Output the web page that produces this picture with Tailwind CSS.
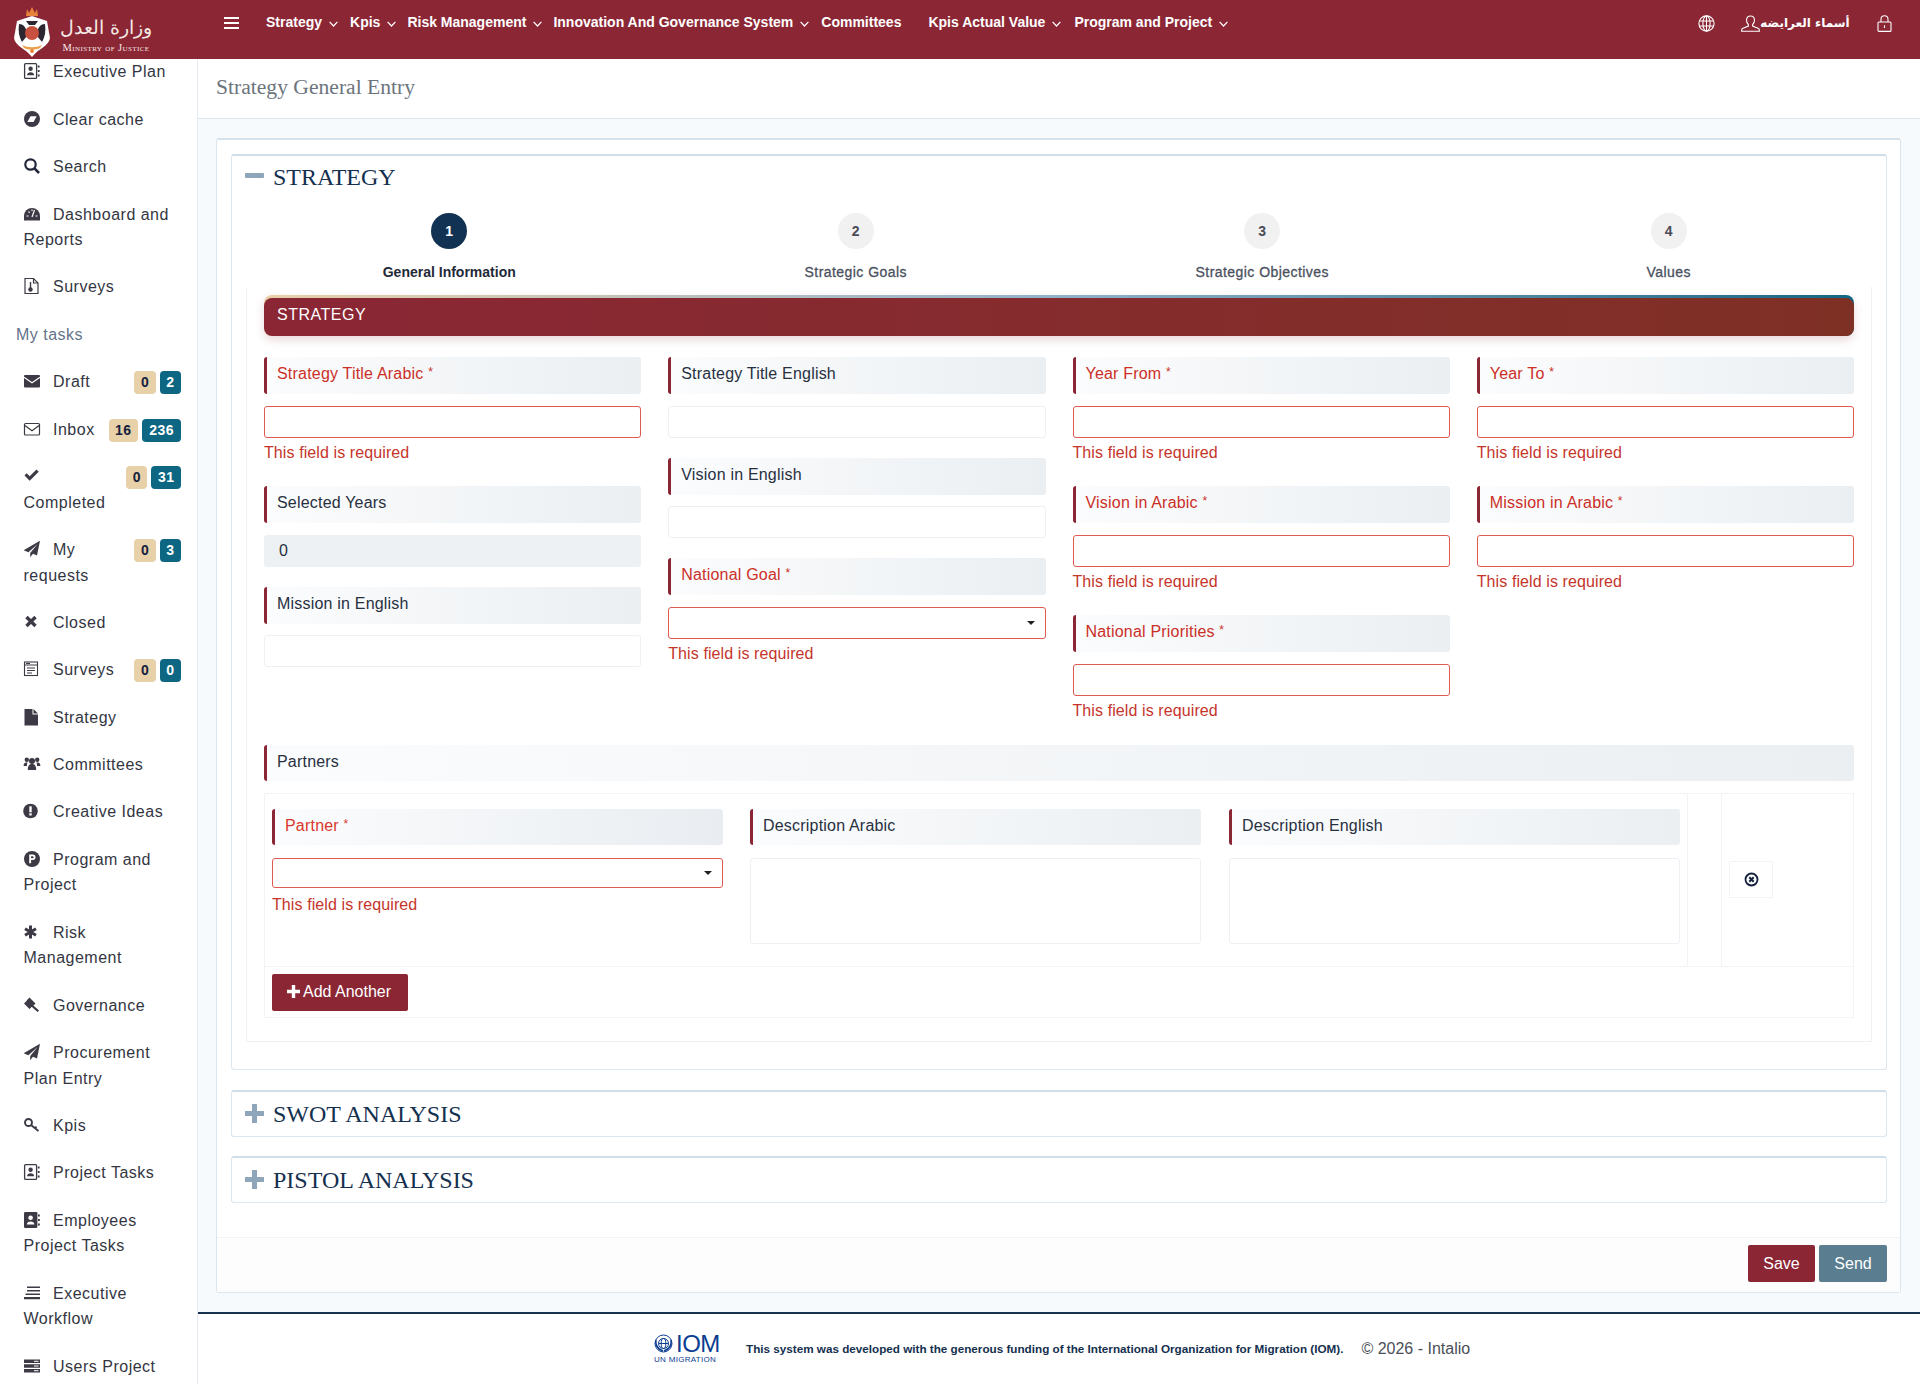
<!DOCTYPE html>
<html lang="en">
<head>
  <meta charset="UTF-8">
  <title>Strategy General Entry</title>
  <script src="https://cdn.jsdelivr.net/npm/@tailwindcss/browser@4"></script>
</head>
<body class="w-[1920px] h-[1384px] overflow-hidden flex flex-col bg-white font-['Liberation_Sans',sans-serif] text-[16px] text-[#333642]">

  <!-- Icon set -->
  <svg class="hidden">
    <symbol id="i-contact" viewBox="0 0 18 18"><rect x="1.6" y="1.6" width="12" height="14.8" rx="1" fill="none" stroke="currentColor" stroke-width="1.3"/><circle cx="7.6" cy="6.7" r="2.2"/><path d="M4 13.2c0-3.9 7.2-3.9 7.2 0z"/><path d="M14.8 3.5h1.8v2h-1.8zM14.8 8h1.8v2h-1.8zM14.8 12.5h1.8v2h-1.8z"/></symbol>
    <symbol id="i-contact-fill" viewBox="0 0 18 18"><rect x="1" y="1" width="13.4" height="16" rx="1.2"/><circle cx="7.6" cy="6.7" r="2.3" fill="#fff"/><path d="M3.8 13.6c0-4.2 7.6-4.2 7.6 0z" fill="#fff"/><path d="M15 3.5h1.8v2H15zM15 8h1.8v2H15zM15 12.5h1.8v2H15z"/></symbol>
    <symbol id="i-plane" viewBox="0 0 18 18"><path d="M17 .8 .6 10.3l4.8 1.9L14.6 4 7.2 13v4.2l2.8-3.4 4 1.6z"/></symbol>
  </svg>

  <!-- Top bar -->
  <header class="h-[59px] shrink-0 bg-[#8b2635] flex items-start text-white relative z-10">
    <div class="w-[224px] shrink-0 h-[59px] flex items-start pl-[13px]">
      <svg class="w-[38px] h-[52px] mt-[6px] shrink-0" viewBox="0 0 38 52">
        <path d="M14 3l2 4 3-6 3 6 2-4 1 7H13z" fill="#e8843a"/>
        <path d="M19 10 34 15 37 32C36 40 26 42 19 51 12 42 2 40 1 32L4 15z" fill="#fff"/>
        <path d="M6 18c5 0 8 4 8 12l-5 6c-3-5-4-11-3-18zM32 18c-5 0-8 4-8 12l5 6c3-5 4-11 3-18z" fill="#2c2630"/>
        <circle cx="19" cy="27" r="7" fill="#c8503c"/>
        <path d="M13 15h12l-3 4h-6z" fill="#2c2630"/>
        <path d="M9 39c6 3 14 3 20 0l-2 3c-5 2-11 2-16 0z" fill="#e8a04a"/>
        <circle cx="19" cy="45" r="2" fill="#e8843a"/>
      </svg>
      <div class="ml-[9px] w-[92px] flex flex-col items-center text-[#f4e9e4] whitespace-nowrap">
        <span class="font-['DejaVu_Sans',sans-serif] text-[19px] leading-[30px] mt-[12px] font-extralight" dir="rtl" lang="ar">وزارة العدل</span>
        <span class="font-['Liberation_Serif',serif] text-[10.5px] leading-[12px] tracking-[0.4px] [font-variant:small-caps]">Ministry of Justice</span>
      </div>
    </div>
    <button class="flex flex-col gap-[2.5px] w-[15px] mt-[17px] mr-[27px] shrink-0">
      <span class="h-[2.4px] bg-white"></span><span class="h-[2.4px] bg-white"></span><span class="h-[2.4px] bg-white"></span>
    </button>
    <nav class="flex items-center h-[44px] text-[14px] font-bold whitespace-nowrap">
      <a class="flex items-center gap-[7px] mr-[12px]">Strategy<svg class="w-[9px] h-[6px] mt-[4px]" viewBox="0 0 9 6" fill="none" stroke="#fff" stroke-width="1.2"><path d="M.6.8 4.5 5 8.4.8"/></svg></a>
      <a class="flex items-center gap-[7px] mr-[11px]">Kpis<svg class="w-[9px] h-[6px] mt-[4px]" viewBox="0 0 9 6" fill="none" stroke="#fff" stroke-width="1.2"><path d="M.6.8 4.5 5 8.4.8"/></svg></a>
      <a class="flex items-center gap-[7px] mr-[11px]">Risk Management<svg class="w-[9px] h-[6px] mt-[4px]" viewBox="0 0 9 6" fill="none" stroke="#fff" stroke-width="1.2"><path d="M.6.8 4.5 5 8.4.8"/></svg></a>
      <a class="flex items-center gap-[7px] mr-[12px]">Innovation And Governance System<svg class="w-[9px] h-[6px] mt-[4px]" viewBox="0 0 9 6" fill="none" stroke="#fff" stroke-width="1.2"><path d="M.6.8 4.5 5 8.4.8"/></svg></a>
      <a class="mr-[27px]">Committees</a>
      <a class="flex items-center gap-[7px] mr-[13px]">Kpis Actual Value<svg class="w-[9px] h-[6px] mt-[4px]" viewBox="0 0 9 6" fill="none" stroke="#fff" stroke-width="1.2"><path d="M.6.8 4.5 5 8.4.8"/></svg></a>
      <a class="flex items-center gap-[7px]">Program and Project<svg class="w-[9px] h-[6px] mt-[4px]" viewBox="0 0 9 6" fill="none" stroke="#fff" stroke-width="1.2"><path d="M.6.8 4.5 5 8.4.8"/></svg></a>
    </nav>
    <div class="ml-auto flex items-center h-[46px] pr-[28px]">
      <svg class="w-[17px] h-[17px] mr-[26px]" viewBox="0 0 17 17" fill="none" stroke="#fff" stroke-width="1.1"><circle cx="8.5" cy="8.5" r="7.6"/><ellipse cx="8.5" cy="8.5" rx="3.6" ry="7.6"/><path d="M8.5.9v15.2M1 6h15M1 11h15"/></svg>
      <svg class="w-[19px] h-[17px]" viewBox="0 0 19 17" fill="none" stroke="#fff" stroke-width="1.1"><path d="M9.5 1c-2.6 0-4 1.8-4 4.2 0 2 1 3.4 1.9 4.4v1.5L1.4 13.4c-.6.3-.8.9-.8 2.9h17.8c0-2-.2-2.6-.8-2.9l-6-2.3V9.6c.9-1 1.9-2.4 1.9-4.4C13.5 2.8 12.1 1 9.5 1z"/></svg>
      <span class="font-['DejaVu_Sans',sans-serif] text-[12px] font-bold w-[90px] text-center whitespace-nowrap" dir="rtl" lang="ar">أسماء العرايضه</span>
      <svg class="w-[15px] h-[17px] ml-[27px]" viewBox="0 0 15 17" fill="none" stroke="#fff" stroke-width="1.1"><rect x="1" y="7" width="13" height="9.4" rx="1"/><path d="M4 7V4.2C4 2 5.5.8 7.5.8S11 2 11 4.2V7M7.5 10.2V13"/></svg>
    </div>
  </header>

  <div class="flex-1 flex min-h-0">
    <!-- Side menu -->
    <aside class="w-[198px] shrink-0 border-r border-[#e6ebf1] overflow-hidden bg-white">
      <nav class="-mt-[10.5px] tracking-[0.5px] leading-[25.6px]">
        <div class="pl-[23.5px] pr-[16px] py-[10.9px]"><svg class="inline-block w-[18px] h-[18px] -ml-[1px] mr-[12.5px] align-[-3px] text-[#3e3a45]" fill="currentColor"><use href="#i-contact"/></svg>Executive Plan</div>
        <div class="pl-[23.5px] pr-[16px] py-[10.9px]"><svg class="inline-block w-[18px] h-[18px] -ml-[1px] mr-[12.5px] align-[-3px]" viewBox="0 0 18 18"><circle cx="9" cy="9" r="8" fill="#3e3a45"/><path d="M4.3 12 7.5 6.2H13.7L10.5 12z" fill="#fff"/></svg>Clear cache</div>
        <div class="pl-[23.5px] pr-[16px] py-[10.9px]"><svg class="inline-block w-[18px] h-[18px] -ml-[1px] mr-[12.5px] align-[-3px]" viewBox="0 0 18 18" fill="none" stroke="#22263a"><circle cx="7.5" cy="7.5" r="5.2" stroke-width="2.2"/><path d="M11.2 11.2 16 16" stroke-width="2.6"/></svg>Search</div>
        <div class="pl-[23.5px] pr-[16px] py-[10.9px]"><svg class="inline-block w-[18px] h-[18px] -ml-[1px] mr-[12.5px] align-[-3px]" viewBox="0 0 18 18"><path d="M1 15.5V11a8 8 0 0 1 16 0v4.5z" fill="#3e3a45"/><path d="M9 12 11.5 5M3.5 11h2M12.5 11h2M5.5 6.5l1.2 1.2M9 4.5V6" stroke="#fff" stroke-width="1.2" fill="none"/></svg>Dashboard and Reports</div>
        <div class="pl-[23.5px] pr-[16px] py-[10.9px]"><svg class="inline-block w-[18px] h-[18px] -ml-[1px] mr-[12.5px] align-[-3px]" viewBox="0 0 18 18"><path d="M2 1.5h8.5L15 6v10.5H2z" fill="none" stroke="#3e3a45" stroke-width="1.2"/><path d="M10.5 1.5V6H15" fill="none" stroke="#3e3a45" stroke-width="1.2"/><circle cx="7.5" cy="12.5" r="2.2" fill="#3e3a45"/><rect x="6.8" y="5" width="1.4" height="6" fill="#3e3a45"/></svg>Surveys</div>

        <div class="pl-[16px] py-[10.9px] text-[#64748b]">My tasks</div>

        <div class="pl-[23.5px] pr-[16px] py-[10.9px]">
          <span class="float-right flex gap-[4px] mt-[2px] text-[14px] leading-[23px] font-bold"><span class="bg-[#e8d0a9] text-[#14213d] rounded-[4px] px-[6.5px]">0</span><span class="bg-[#0d6783] text-white rounded-[4px] px-[6.5px]">2</span></span>
          <svg class="inline-block w-[18px] h-[18px] -ml-[1px] mr-[12.5px] align-[-3px]" viewBox="0 0 18 18"><rect x="1" y="3" width="16" height="12.5" rx="1" fill="#3e3a45"/><path d="M1 5.2 9 10.8 17 5.2" fill="none" stroke="#fff" stroke-width="1.1"/></svg>Draft</div>
        <div class="pl-[23.5px] pr-[16px] py-[10.9px]">
          <span class="float-right flex gap-[4px] mt-[2px] text-[14px] leading-[23px] font-bold"><span class="bg-[#e8d0a9] text-[#14213d] rounded-[4px] px-[6.5px]">16</span><span class="bg-[#0d6783] text-white rounded-[4px] px-[7px]">236</span></span>
          <svg class="inline-block w-[18px] h-[18px] -ml-[1px] mr-[12.5px] align-[-3px]" viewBox="0 0 18 18" fill="none" stroke="#3e3a45" stroke-width="1.2"><rect x="1.5" y="3.5" width="15" height="11.5" rx="1"/><path d="M1.5 5.2 9 10.8 16.5 5.2"/></svg>Inbox</div>
        <div class="pl-[23.5px] pr-[16px] py-[10.9px]">
          <span class="float-right flex gap-[4px] mt-[2px] text-[14px] leading-[23px] font-bold"><span class="bg-[#e8d0a9] text-[#14213d] rounded-[4px] px-[6.5px]">0</span><span class="bg-[#0d6783] text-white rounded-[4px] px-[6.5px]">31</span></span>
          <svg class="inline-block w-[18px] h-[18px] -ml-[1px] mr-[12.5px] align-[-3px]" viewBox="0 0 18 18"><path d="M1.5 8.5 3.7 6.3 6.7 9.3 13.5 2.5 15.7 4.7 6.7 13.7z" fill="#3e3a45"/></svg>Completed</div>
        <div class="pl-[23.5px] pr-[16px] py-[10.9px]">
          <span class="float-right flex gap-[4px] mt-[2px] text-[14px] leading-[23px] font-bold"><span class="bg-[#e8d0a9] text-[#14213d] rounded-[4px] px-[6.5px]">0</span><span class="bg-[#0d6783] text-white rounded-[4px] px-[6.5px]">3</span></span>
          <svg class="inline-block w-[18px] h-[18px] -ml-[1px] mr-[12.5px] align-[-3px] text-[#3e3a45]" fill="currentColor"><use href="#i-plane"/></svg>My requests</div>
        <div class="pl-[23.5px] pr-[16px] py-[10.9px]"><svg class="inline-block w-[18px] h-[18px] -ml-[1px] mr-[12.5px] align-[-3px]" viewBox="0 0 18 18" fill="none" stroke="#3e3a45" stroke-width="3.4"><path d="M3.5 4 12.5 13M12.5 4 3.5 13"/></svg>Closed</div>
        <div class="pl-[23.5px] pr-[16px] py-[10.9px]">
          <span class="float-right flex gap-[4px] mt-[2px] text-[14px] leading-[23px] font-bold"><span class="bg-[#e8d0a9] text-[#14213d] rounded-[4px] px-[6.5px]">0</span><span class="bg-[#0d6783] text-white rounded-[4px] px-[6.5px]">0</span></span>
          <svg class="inline-block w-[18px] h-[18px] -ml-[1px] mr-[12.5px] align-[-3px]" viewBox="0 0 18 18" fill="none" stroke="#3e3a45" stroke-width="1.1"><rect x="1.5" y="2" width="13" height="13.5"/><path d="M1.5 5H14.5M4 8h8M4 10.5h8M4 13h5"/><path d="M3 3.5h4"/></svg>Surveys</div>
        <div class="pl-[23.5px] pr-[16px] py-[10.9px]"><svg class="inline-block w-[18px] h-[18px] -ml-[1px] mr-[12.5px] align-[-3px]" viewBox="0 0 18 18" fill="#3e3a45"><path d="M1.5 1h8v5.5H15v11H1.5zM10.5 1 15 5.5h-4.5z"/></svg>Strategy</div>
        <div class="pl-[23.5px] pr-[16px] py-[10.9px]"><svg class="inline-block w-[18px] h-[18px] -ml-[1px] mr-[12.5px] align-[-3px]" viewBox="0 0 18 18" fill="#3e3a45"><circle cx="3.8" cy="4.8" r="2.2"/><circle cx="14.2" cy="4.8" r="2.2"/><circle cx="9" cy="6" r="3"/><path d="M.6 11c0-3 1.5-4 4-3.5-.6 1-.8 2-.6 3.5zM17.4 11c0-3-1.5-4-4-3.5.6 1 .8 2 .6 3.5zM4.8 15c0-5 2-6 4.2-6s4.2 1 4.2 6z"/></svg>Committees</div>
        <div class="pl-[23.5px] pr-[16px] py-[10.9px]"><svg class="inline-block w-[18px] h-[18px] -ml-[1px] mr-[12.5px] align-[-3px]" viewBox="0 0 18 18"><circle cx="7.5" cy="9" r="7.3" fill="#3e3a45"/><rect x="6.3" y="4.3" width="2.4" height="6" fill="#fff"/><rect x="6.3" y="11.3" width="2.4" height="2.2" fill="#fff"/></svg>Creative Ideas</div>
        <div class="pl-[23.5px] pr-[16px] py-[10.9px]"><svg class="inline-block w-[18px] h-[18px] -ml-[1px] mr-[12.5px] align-[-3px]" viewBox="0 0 18 18"><circle cx="9" cy="9" r="8" fill="#3e3a45"/><path d="M6.2 4.5h3.6a2.7 2.7 0 0 1 0 5.4H8.1v3.3H6.2zM8.1 6.2v2h1.5a1 1 0 0 0 0-2z" fill="#fff"/></svg>Program and Project</div>
        <div class="pl-[23.5px] pr-[16px] py-[10.9px]"><svg class="inline-block w-[18px] h-[18px] -ml-[1px] mr-[12.5px] align-[-3px]" viewBox="0 0 18 18" fill="none" stroke="#3e3a45" stroke-width="3"><path d="M7.5 2.5v13M2 5.7 13 12.3M13 5.7 2 12.3"/></svg>Risk Management</div>
        <div class="pl-[23.5px] pr-[16px] py-[10.9px]"><svg class="inline-block w-[18px] h-[18px] -ml-[1px] mr-[12.5px] align-[-3px]" viewBox="0 0 18 18" fill="#3e3a45"><path d="M6.5 1.5 12.5 7.5 9.5 10.5 3.5 4.5zM1 7.5 4 4.5 9.5 10 6.5 13zM9.3 8.5 16 14.5 14.5 16 7.8 10z"/></svg>Governance</div>
        <div class="pl-[23.5px] pr-[16px] py-[10.9px]"><svg class="inline-block w-[18px] h-[18px] -ml-[1px] mr-[12.5px] align-[-3px] text-[#3e3a45]" fill="currentColor"><use href="#i-plane"/></svg>Procurement Plan Entry</div>
        <div class="pl-[23.5px] pr-[16px] py-[10.9px]"><svg class="inline-block w-[18px] h-[18px] -ml-[1px] mr-[12.5px] align-[-3px]" viewBox="0 0 18 18" fill="none" stroke="#3e3a45"><circle cx="5.5" cy="6.5" r="3.5" stroke-width="1.9"/><path d="M8 9 15.5 15M12 12.2l1.5-1.5" stroke-width="1.9"/></svg>Kpis</div>
        <div class="pl-[23.5px] pr-[16px] py-[10.9px]"><svg class="inline-block w-[18px] h-[18px] -ml-[1px] mr-[12.5px] align-[-3px] text-[#3e3a45]" fill="currentColor"><use href="#i-contact"/></svg>Project Tasks</div>
        <div class="pl-[23.5px] pr-[16px] py-[10.9px]"><svg class="inline-block w-[18px] h-[18px] -ml-[1px] mr-[12.5px] align-[-3px] text-[#3e3a45]" fill="currentColor"><use href="#i-contact-fill"/></svg>Employees Project Tasks</div>
        <div class="pl-[23.5px] pr-[16px] py-[10.9px]"><svg class="inline-block w-[18px] h-[18px] -ml-[1px] mr-[12.5px] align-[-3px]" viewBox="0 0 18 18" fill="#3e3a45"><path d="M4 2.5h13v1.6H4zM4 6h13v1.6H4zM2.5 9.5H17v1.6H2.5zM1 13h16v2.2H1z"/></svg>Executive Workflow</div>
        <div class="pl-[23.5px] pr-[16px] py-[10.9px]"><svg class="inline-block w-[18px] h-[18px] -ml-[1px] mr-[12.5px] align-[-3px]" viewBox="0 0 18 18"><path d="M1 2.5h16v3.6H1zM1 7.2h16v3.6H1zM1 11.9h16v3.6H1z" fill="#3e3a45"/><path d="M11 4.3h4.500M11 9h4.500M11 13.700h4.500" stroke="#fff" stroke-width="1"/></svg>Users Project</div>
      </nav>
    </aside>

    <!-- Main content -->
    <main class="flex-1 min-w-0 flex flex-col bg-[#f6fafd]">
      <div class="h-[60px] shrink-0 bg-white border-b border-[#dde6ee] flex items-center pl-[18px] pb-[2px]">
        <h1 class="font-['Liberation_Serif',serif] text-[21.6px] font-normal text-[#6c757d]">Strategy General Entry</h1>
      </div>

      <div class="shrink-0 ml-[18px] mr-[19px] mt-[19px] h-[1155px] bg-white border border-[#dbe6ee] border-t-2 border-t-[#d5e2eb] rounded-[3px] flex flex-col">
        <div class="pl-[14px] pr-[13px] pt-[14px]">

          <!-- Strategy accordion -->
          <section class="h-[916px] border border-[#dbe6ee] border-t-2 border-t-[#cfdfe9] rounded-[3px]">
            <div class="h-[45px] flex items-center pl-[13px] pb-[4px]">
              <span class="w-[19px] h-[5px] bg-[#8ea5ba] rounded-[1px] mr-[9px] -mt-[2px]"></span>
              <h2 class="font-['Liberation_Serif',serif] text-[24px] text-[#14304f] font-normal">STRATEGY</h2>
            </div>

            <div class="mx-[14px]">
              <!-- Steps -->
              <div class="grid grid-cols-4 pt-[12px] h-[86px] text-[14px] text-center">
                <div class="flex flex-col items-center">
                  <span class="w-[36px] h-[36px] rounded-full bg-[#123253] text-white font-bold flex items-center justify-center">1</span>
                  <span class="mt-[13px] leading-[20px] font-bold text-[#1f2937]">General Information</span>
                </div>
                <div class="flex flex-col items-center tracking-[0.45px]">
                  <span class="w-[36px] h-[36px] rounded-full bg-[#f1f1f2] text-[#4b4b57] font-bold flex items-center justify-center">2</span>
                  <span class="mt-[13px] leading-[20px] text-[#4a5160] [-webkit-text-stroke:0.3px_#4a5160]">Strategic Goals</span>
                </div>
                <div class="flex flex-col items-center tracking-[0.45px]">
                  <span class="w-[36px] h-[36px] rounded-full bg-[#f1f1f2] text-[#4b4b57] font-bold flex items-center justify-center">3</span>
                  <span class="mt-[13px] leading-[20px] text-[#4a5160] [-webkit-text-stroke:0.3px_#4a5160]">Strategic Objectives</span>
                </div>
                <div class="flex flex-col items-center tracking-[0.45px]">
                  <span class="w-[36px] h-[36px] rounded-full bg-[#f1f1f2] text-[#4b4b57] font-bold flex items-center justify-center">4</span>
                  <span class="mt-[13px] leading-[20px] text-[#4a5160] [-webkit-text-stroke:0.3px_#4a5160]">Values</span>
                </div>
              </div>

              <!-- Form panel -->
              <div class="h-[755px] border-x border-b border-[#eef2f5] pt-[8px] px-[17px]">
                <div class="rounded-[8px] pt-[3px] bg-linear-to-r from-[#e8d0a9] via-[#8fb2cc] to-[#0d6783] shadow-[0_4px_10px_rgba(139,38,53,0.18)]">
                  <div class="h-[38px] rounded-[8px] bg-linear-to-r from-[#8b2635] to-[#7f3025] text-white tracking-[0.5px] leading-[34px] pl-[13px]">STRATEGY</div>
                </div>

                <div class="grid grid-cols-4 gap-x-[27px] mt-[21px] mb-[1px] leading-[34px] tracking-[0.2px]">
                  <!-- Column 1 -->
                  <div>
                    <div class="mb-[19px]">
                      <div class="h-[37px] mb-[11.5px] pl-[10px] border-l-[3.5px] border-[#8b2635] rounded-[3px] bg-linear-to-r from-[#fbfcfd] to-[#ebeff2] text-[#cb2f27]">Strategy Title Arabic <span class="text-[12px] leading-[0] align-[3px]">*</span></div>
                      <div class="h-[32px] bg-white border border-[#e05a4f] rounded-[3px]"></div>
                      <p class="leading-[29.5px] tracking-[0.1px] text-[#c5352b]">This field is required</p>
                    </div>
                    <div class="mb-[20px]">
                      <div class="h-[37px] mb-[11.5px] pl-[10px] border-l-[3.5px] border-[#8b2635] rounded-[3px] bg-linear-to-r from-[#fbfcfd] to-[#ebeff2] text-[#27303f]">Selected Years</div>
                      <div class="h-[32px] bg-[#eef1f4] rounded-[3px] pl-[15px] leading-[32px] text-[#27303f]">0</div>
                    </div>
                    <div class="mb-[20px]">
                      <div class="h-[37px] mb-[11.5px] pl-[10px] border-l-[3.5px] border-[#8b2635] rounded-[3px] bg-linear-to-r from-[#fbfcfd] to-[#ebeff2] text-[#27303f]">Mission in English</div>
                      <div class="h-[32px] bg-white border border-[#edf1f5] rounded-[3px]"></div>
                    </div>
                  </div>
                  <!-- Column 2 -->
                  <div>
                    <div class="mb-[20px]">
                      <div class="h-[37px] mb-[11.5px] pl-[10px] border-l-[3.5px] border-[#8b2635] rounded-[3px] bg-linear-to-r from-[#fbfcfd] to-[#ebeff2] text-[#27303f]">Strategy Title English</div>
                      <div class="h-[32px] bg-white border border-[#edf1f5] rounded-[3px]"></div>
                    </div>
                    <div class="mb-[20px]">
                      <div class="h-[37px] mb-[11.5px] pl-[10px] border-l-[3.5px] border-[#8b2635] rounded-[3px] bg-linear-to-r from-[#fbfcfd] to-[#ebeff2] text-[#27303f]">Vision in English</div>
                      <div class="h-[32px] bg-white border border-[#edf1f5] rounded-[3px]"></div>
                    </div>
                    <div class="mb-[19px]">
                      <div class="h-[37px] mb-[11.5px] pl-[10px] border-l-[3.5px] border-[#8b2635] rounded-[3px] bg-linear-to-r from-[#fbfcfd] to-[#ebeff2] text-[#cb2f27]">National Goal <span class="text-[12px] leading-[0] align-[3px]">*</span></div>
                      <div class="h-[32px] bg-white border border-[#e05a4f] rounded-[3px] flex items-center justify-end pr-[10px]"><span class="w-0 h-0 border-x-[4px] border-x-transparent border-t-[4px] border-t-[#222]"></span></div>
                      <p class="leading-[29.5px] tracking-[0.1px] text-[#c5352b]">This field is required</p>
                    </div>
                  </div>
                  <!-- Column 3 -->
                  <div>
                    <div class="mb-[19px]">
                      <div class="h-[37px] mb-[11.5px] pl-[10px] border-l-[3.5px] border-[#8b2635] rounded-[3px] bg-linear-to-r from-[#fbfcfd] to-[#ebeff2] text-[#cb2f27]">Year From <span class="text-[12px] leading-[0] align-[3px]">*</span></div>
                      <div class="h-[32px] bg-white border border-[#e05a4f] rounded-[3px]"></div>
                      <p class="leading-[29.5px] tracking-[0.1px] text-[#c5352b]">This field is required</p>
                    </div>
                    <div class="mb-[19px]">
                      <div class="h-[37px] mb-[11.5px] pl-[10px] border-l-[3.5px] border-[#8b2635] rounded-[3px] bg-linear-to-r from-[#fbfcfd] to-[#ebeff2] text-[#cb2f27]">Vision in Arabic <span class="text-[12px] leading-[0] align-[3px]">*</span></div>
                      <div class="h-[32px] bg-white border border-[#e05a4f] rounded-[3px]"></div>
                      <p class="leading-[29.5px] tracking-[0.1px] text-[#c5352b]">This field is required</p>
                    </div>
                    <div class="mb-[19px]">
                      <div class="h-[37px] mb-[11.5px] pl-[10px] border-l-[3.5px] border-[#8b2635] rounded-[3px] bg-linear-to-r from-[#fbfcfd] to-[#ebeff2] text-[#cb2f27]">National Priorities <span class="text-[12px] leading-[0] align-[3px]">*</span></div>
                      <div class="h-[32px] bg-white border border-[#e05a4f] rounded-[3px]"></div>
                      <p class="leading-[29.5px] tracking-[0.1px] text-[#c5352b]">This field is required</p>
                    </div>
                  </div>
                  <!-- Column 4 -->
                  <div>
                    <div class="mb-[19px]">
                      <div class="h-[37px] mb-[11.5px] pl-[10px] border-l-[3.5px] border-[#8b2635] rounded-[3px] bg-linear-to-r from-[#fbfcfd] to-[#ebeff2] text-[#cb2f27]">Year To <span class="text-[12px] leading-[0] align-[3px]">*</span></div>
                      <div class="h-[32px] bg-white border border-[#e05a4f] rounded-[3px]"></div>
                      <p class="leading-[29.5px] tracking-[0.1px] text-[#c5352b]">This field is required</p>
                    </div>
                    <div class="mb-[19px]">
                      <div class="h-[37px] mb-[11.5px] pl-[10px] border-l-[3.5px] border-[#8b2635] rounded-[3px] bg-linear-to-r from-[#fbfcfd] to-[#ebeff2] text-[#cb2f27]">Mission in Arabic <span class="text-[12px] leading-[0] align-[3px]">*</span></div>
                      <div class="h-[32px] bg-white border border-[#e05a4f] rounded-[3px]"></div>
                      <p class="leading-[29.5px] tracking-[0.1px] text-[#c5352b]">This field is required</p>
                    </div>
                  </div>
                </div>

                <!-- Partners -->
                <div class="h-[36px] pl-[10px] leading-[34px] tracking-[0.2px] border-l-[3.5px] border-[#8b2635] rounded-[3px] bg-linear-to-r from-[#fbfcfd] to-[#ebeff2] text-[#27303f]">Partners</div>
                <div class="mt-[12px] h-[225px] border border-[#f1f3f5] leading-[34px] tracking-[0.2px]">
                  <div class="h-[173px] flex border-b border-[#f1f3f5]">
                    <div class="w-[451px] ml-[7px] mt-[15px] shrink-0">
                      <div class="h-[36px] mb-[13px] pl-[10px] border-l-[3.5px] border-[#8b2635] rounded-[3px] bg-linear-to-r from-[#fbfcfd] to-[#e9edf1] text-[#d8382c]">Partner <span class="text-[12px] leading-[0] align-[3px]">*</span></div>
                      <div class="h-[30px] bg-white border border-[#e05a4f] rounded-[3px] flex items-center justify-end pr-[10px]"><span class="w-0 h-0 border-x-[4px] border-x-transparent border-t-[4px] border-t-[#222]"></span></div>
                      <p class="leading-[34px] tracking-[0.1px] text-[#c5352b]">This field is required</p>
                    </div>
                    <div class="w-[451px] ml-[27px] mt-[15px] shrink-0">
                      <div class="h-[36px] mb-[13px] pl-[10px] border-l-[3.5px] border-[#8b2635] rounded-[3px] bg-linear-to-r from-[#fbfcfd] to-[#ebeff2] text-[#27303f]">Description Arabic</div>
                      <div class="h-[86px] bg-white border border-[#edf1f5] rounded-[3px]"></div>
                    </div>
                    <div class="w-[451px] ml-[28px] mt-[15px] shrink-0">
                      <div class="h-[36px] mb-[13px] pl-[10px] border-l-[3.5px] border-[#8b2635] rounded-[3px] bg-linear-to-r from-[#fbfcfd] to-[#ebeff2] text-[#27303f]">Description English</div>
                      <div class="h-[86px] bg-white border border-[#edf1f5] rounded-[3px]"></div>
                    </div>
                    <div class="ml-[7px] w-[34px] border-l border-[#f1f3f5]"></div>
                    <div class="flex-1 border-l border-[#f1f3f5] flex items-center pl-[7px] pb-[2px]">
                      <button class="w-[44px] h-[37px] border border-[#f1f3f5] flex items-center justify-center">
                        <svg class="w-[15px] h-[15px]" viewBox="0 0 15 15" fill="none" stroke="#14213d"><circle cx="7.5" cy="7.5" r="6" stroke-width="1.8"/><path d="M5.3 5.3 9.7 9.7M9.7 5.3 5.3 9.7" stroke-width="2"/></svg>
                      </button>
                    </div>
                  </div>
                  <div class="pt-[7px] pl-[7px]">
                    <button class="h-[37px] w-[136px] bg-[#8b2635] rounded-[2px] text-white flex items-center pl-[15px] pb-[2px] tracking-normal">
                      <svg class="w-[13px] h-[13px] mr-[3px]" viewBox="0 0 13 13" fill="#fff"><path d="M4.8 0h3.4v4.8H13v3.4H8.200V13H4.800V8.200H0V4.800h4.800z"/></svg>Add Another
                    </button>
                  </div>
                </div>
              </div>
            </div>
          </section>

          <!-- Collapsed accordions -->
          <section class="h-[47px] mt-[20px] border border-[#dbe6ee] border-t-2 border-t-[#cfdfe9] rounded-[3px] flex items-center pl-[13px]">
            <svg class="w-[19px] h-[19px] mr-[9px] -mt-[2px]" viewBox="0 0 19 19" fill="#8ea5ba"><path d="M7 0h5v7h7v5h-7v7H7v-7H0V7h7z"/></svg>
            <h2 class="font-['Liberation_Serif',serif] text-[24px] text-[#14304f] font-normal -mt-[1px]">SWOT ANALYSIS</h2>
          </section>
          <section class="h-[47px] mt-[19px] border border-[#dbe6ee] border-t-2 border-t-[#cfdfe9] rounded-[3px] flex items-center pl-[13px]">
            <svg class="w-[19px] h-[19px] mr-[9px] -mt-[2px]" viewBox="0 0 19 19" fill="#8ea5ba"><path d="M7 0h5v7h7v5h-7v7H7v-7H0V7h7z"/></svg>
            <h2 class="font-['Liberation_Serif',serif] text-[24px] text-[#14304f] font-normal -mt-[1px]">PISTOL ANALYSIS</h2>
          </section>
        </div>

        <!-- Form actions -->
        <div class="mt-[34px] flex-1 border-t border-[#f1f3f5] bg-[#fdfdfe] flex justify-end gap-[4px] pt-[7px] pr-[13px]">
          <button class="w-[67px] h-[37px] bg-[#8b2635] rounded-[2px] text-white">Save</button>
          <button class="w-[68px] h-[37px] bg-[#5a7d90] rounded-[2px] text-white">Send</button>
        </div>
      </div>

      <!-- Footer -->
      <footer class="mt-[19px] flex-1 border-t-2 border-[#16324f] bg-white flex items-center pl-[456px] pb-[1px] whitespace-nowrap">
        <div class="w-[65px] shrink-0">
          <div class="flex items-center gap-[3px]">
            <svg class="w-[19px] h-[19px] shrink-0" viewBox="0 0 19 19" fill="none" stroke="#0b3d91" stroke-width="1"><circle cx="9.5" cy="9.5" r="8.5"/><circle cx="9.5" cy="9.5" r="5"/><ellipse cx="9.5" cy="9.5" rx="2.3" ry="5"/><path d="M4.5 9.5h10"/><path d="M2 6c-1 4 1 9 7 11M17 6c1 4-1 9-7 11" stroke-width="1.6"/></svg>
            <span class="text-[24px] leading-[20px] text-[#0b3d91] tracking-[-0.5px]">IOM</span>
          </div>
          <div class="text-[8px] leading-[9px] text-[#0b3d91] tracking-[0.3px] mt-[1px]">UN MIGRATION</div>
        </div>
        <span class="ml-[27px] text-[11.7px] font-bold text-[#15304f]">This system was developed with the generous funding of the International Organization for Migration (IOM).</span>
        <span class="ml-[18px] text-[#4a4f57]">© 2026 - Intalio</span>
      </footer>
    </main>
  </div>
</body>
</html>
